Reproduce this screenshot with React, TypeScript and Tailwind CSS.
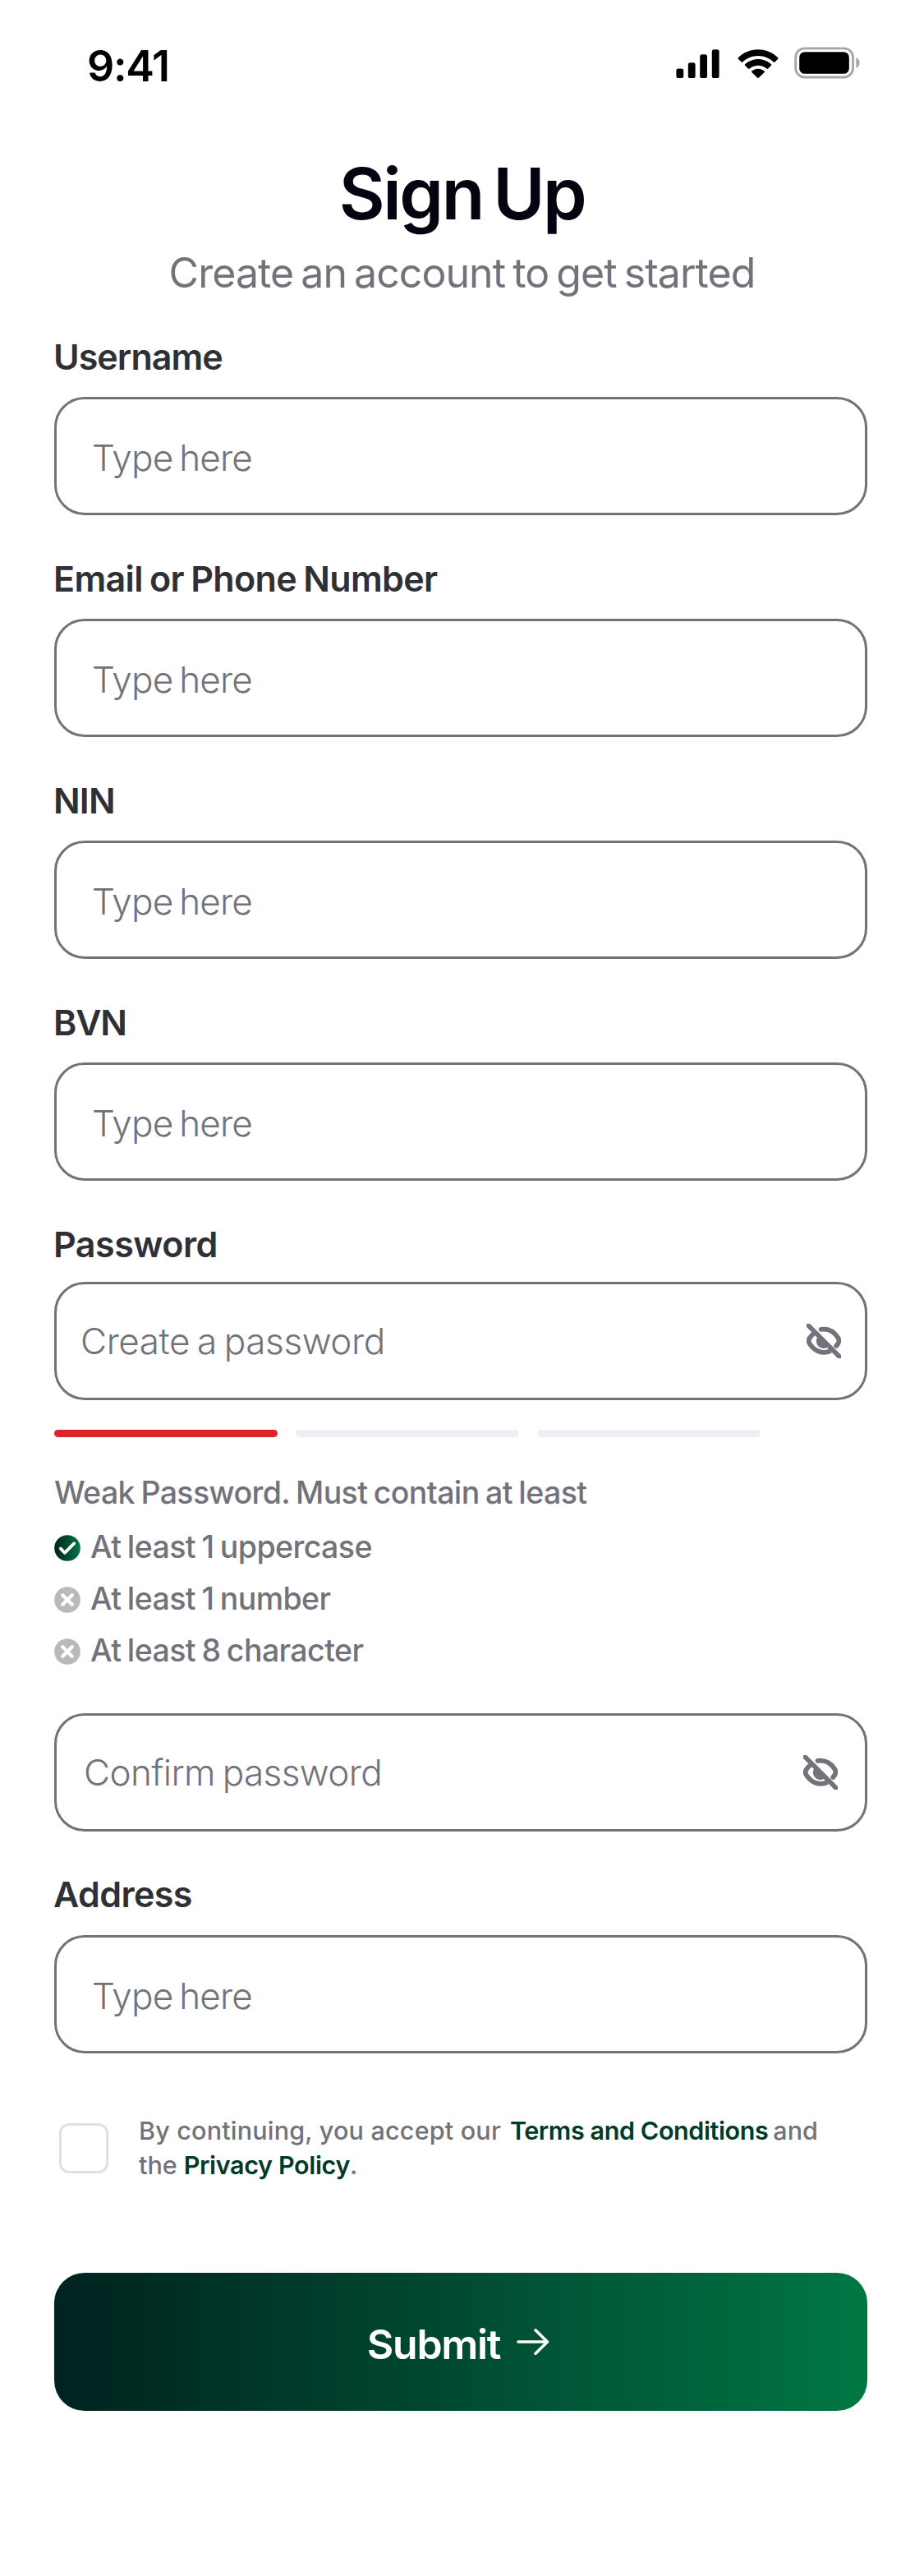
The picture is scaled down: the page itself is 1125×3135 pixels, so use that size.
import type { ReactNode } from "react";

function StatusIcons() {
  return (
    <div className="flex items-start text-black">
      <svg width="54" height="36" viewBox="0 0 54 36" fill="currentColor">
        <rect x="0.4" y="23.5" width="8.8" height="11.5" rx="2.6" />
        <rect x="14.8" y="16.3" width="8.8" height="18.7" rx="2.6" />
        <rect x="29.2" y="6.2" width="8.8" height="28.8" rx="2.6" />
        <rect x="43.8" y="0.2" width="8.8" height="34.8" rx="2.6" />
      </svg>
      <svg className="ml-[21px]" width="50" height="36" viewBox="0 0 50 36" fill="currentColor">
        <path d="M25 0.2C34.5 0.2 43 4 49.2 10.2Q50 11 49.2 11.8L45.4 15.6Q44.6 16.4 43.8 15.6C38.7 10.7 32.2 8 25 8S11.3 10.7 6.2 15.6Q5.4 16.4 4.6 15.6L0.8 11.8Q0 11 0.8 10.2C7 4 15.5 0.2 25 0.2Z" />
        <path d="M25 12C31.2 12 36.7 14.3 40.9 18.2Q41.7 19 40.9 19.8L37.1 23.6Q36.3 24.3 35.5 23.6C32.6 21.1 29 19.7 25 19.7S17.4 21.1 14.5 23.6Q13.7 24.3 12.9 23.6L9.1 19.8Q8.3 19 9.1 18.2C13.3 14.3 18.8 12 25 12Z" />
        <path d="M25 23.7C28 23.7 30.7 24.8 32.7 26.5Q33.4 27.2 32.7 27.9L25.7 34.8Q25 35.4 24.3 34.8L17.3 27.9Q16.6 27.2 17.3 26.5C19.3 24.8 22 23.7 25 23.7Z" />
      </svg>
      <svg className="-mt-[3px] ml-[19px]" width="81" height="39" viewBox="0 0 81 39">
        <rect x="1.7" y="1.8" width="69.8" height="35.2" rx="11" fill="none" stroke="#a6a6a6" strokeWidth="2.8" />
        <rect x="6.2" y="6.2" width="60.6" height="26.6" rx="6.5" fill="#000" />
        <path d="M75.3 13.2C78 14.3 79.6 16.6 79.6 19.4S78 24.5 75.3 25.6Z" fill="#a6a6a6" />
      </svg>
    </div>
  );
}

function EyeOffIcon() {
  return (
    <svg width="42" height="42" viewBox="0 0 42 42" fill="none" stroke="currentColor" strokeWidth="5.8" strokeLinecap="round">
      <path d="M17.6 6.8C27 5.6 34 10 38.4 17.2Q40.4 20.8 38.4 24L36.2 27" />
      <path d="M9.5 11.3Q6 14 3.6 17.6Q1.8 20.8 3.6 24C9.5 33.5 19.5 37.5 29.5 33" strokeLinecap="butt" />
      <path d="M14.2 16.2A8.3 8.3 0 0 0 25.8 27.8Z" fill="currentColor" stroke="currentColor" strokeWidth="1.4" />
      <path d="M4.1 0L42 37.9V42H37.9L0 4.1V0Z" fill="currentColor" stroke="none" />
    </svg>
  );
}

function CheckBadge() {
  return (
    <svg width="32" height="32" viewBox="0 0 32 32" fill="none">
      <defs>
        <linearGradient id="badge" x1="0" y1="0" x2="1" y2="0">
          <stop stopColor="#00231f" />
          <stop offset="1" stopColor="#007743" />
        </linearGradient>
      </defs>
      <circle cx="16" cy="16" r="15.8" fill="url(#badge)" />
      <path d="M7.9 16.6L12.7 21.8L24.2 10.4" stroke="#fff" strokeWidth="3.8" strokeLinecap="round" strokeLinejoin="round" />
    </svg>
  );
}

function CrossBadge() {
  return (
    <svg width="32" height="32" viewBox="0 0 32 32" fill="none">
      <circle cx="16" cy="16" r="15.8" fill="#b9b9b9" />
      <path d="M10.2 10.2L21.8 21.8M21.8 10.2L10.2 21.8" stroke="#fff" strokeWidth="4.2" strokeLinecap="round" />
    </svg>
  );
}

function Label({ text, className }: { text: string; className: string }) {
  return (
    <div className={`h-14 text-[43px] leading-[54px] font-[640] text-[#2f3036] ${className}`}>
      <span className="-ml-px">{text}</span>
    </div>
  );
}

function InputBox({ children }: { children: ReactNode }) {
  return (
    <div className="flex h-[144px] w-full items-center justify-between rounded-[37px] border-3 border-[#72727b] text-[44px] leading-none font-[340] text-[#72727b]">
      {children}
    </div>
  );
}

function TextField({ label, className }: { label: string; className: string }) {
  return (
    <div>
      <Label text={label} className={className} />
      <div className="mt-[20.5px]">
        <InputBox>
          <span className="mt-1 pl-[43px] tracking-[-0.85px] [word-spacing:-3.5px]">Type here</span>
        </InputBox>
      </div>
    </div>
  );
}

function Rule({ met, children }: { met: boolean; children: ReactNode }) {
  return (
    <li className="flex h-[63px] items-center gap-[12px]">
      <span className="mt-1">{met ? <CheckBadge /> : <CrossBadge />}</span>
      <span className="mt-0.5 tracking-[-0.58px] [word-spacing:-2px]">{children}</span>
    </li>
  );
}

export default function App() {
  return (
    <div className="h-[3135px] w-[1125px] bg-white font-['Inter',sans-serif]">
      <header className="flex h-[162px] items-start justify-between pr-[77px] pl-[106px]">
        <span className="mt-[51px] text-[52px] leading-[60px] font-semibold tracking-[-1.3px] text-black">9:41</span>
        <span className="mt-[60px]">
          <StatusIcons />
        </span>
      </header>

      <div className="mt-6 text-center">
        <h1 className="text-[86px] leading-[100px] font-semibold tracking-[-2.4px] text-[#05030f] [word-spacing:-7px]">Sign Up</h1>
        <p className="mt-4 text-[50px] leading-[61px] tracking-[-0.95px] text-[#72727b] [word-spacing:-4px]">
          Create an account to get started
        </p>
      </div>

      <main className="mt-[43.5px] mr-[69px] ml-[66px]">
        <div className="flex flex-col gap-[49.5px]">
          <TextField label="Username" className="tracking-[-0.95px]" />
          <TextField label="Email or Phone Number" className="tracking-[-0.63px] [word-spacing:-2px]" />
          <TextField label="NIN" className="tracking-[-0.8px]" />
          <TextField label="BVN" className="tracking-[-1.2px]" />
        </div>

        <Label text="Password" className="mt-[49.5px] tracking-[-0.5px]" />
        <div className="mt-[17px]">
          <InputBox>
            <span className="pl-[29px] tracking-[-0.4px] [word-spacing:-3px]">Create a password</span>
            <span className="mr-[29px]">
              <EyeOffIcon />
            </span>
          </InputBox>
        </div>

        <div className="mt-9 flex gap-[22px]">
          <span className="h-[9px] w-[272px] rounded-full bg-[#dc2328]" />
          <span className="h-[9px] w-[272px] rounded-full bg-[#eff0f6]" />
          <span className="h-[9px] w-[272px] rounded-full bg-[#eff0f6]" />
        </div>

        <div className="mt-[43px] text-[37.5px] leading-[48px] font-medium text-[#72727b]">
          <p className="pt-px tracking-[-0.6px] [word-spacing:-2px]">Weak Password. Must contain at least</p>
          <ul className="mt-[9.5px]">
            <Rule met>At least 1 uppercase</Rule>
            <Rule met={false}>At least 1 number</Rule>
            <Rule met={false}>At least 8 character</Rule>
          </ul>
        </div>

        <div className="mt-[45.5px]">
          <InputBox>
            <span className="pl-[33px] tracking-[-0.6px] [word-spacing:-3px]">Confirm password</span>
            <span className="mr-[33px]">
              <EyeOffIcon />
            </span>
          </InputBox>
        </div>

        <div className="mt-[49.5px]">
          <TextField label="Address" className="tracking-[-0.6px]" />
        </div>

        <div className="mt-[73px] flex items-start pl-1.5">
          <span className="mt-3 h-[61px] w-[60px] rounded-[12px] border-3 border-[#e0e0e0]" />
          <p className="ml-[37px] text-[30.5px] leading-[42px] font-[540] whitespace-nowrap text-[#72727b]">
            <span className="tracking-[0.2px]">By continuing, you accept our</span>
            <span className="ml-[11px] font-semibold tracking-[-0.4px] text-[#003a28]">Terms and Conditions</span>
            <span className="ml-[6px]">and</span>
            <br />
            the
            <span className="ml-[8px] font-semibold tracking-[-0.35px] text-[#003a28]">Privacy Policy</span>.
          </p>
        </div>

        <button className="mt-[110px] flex h-[168px] w-full items-center justify-center gap-5 rounded-[37px] bg-linear-to-r from-[#00231f] to-[#007743] pr-1.5 text-white">
          <span className="mt-1.5 text-[50px] leading-none font-semibold tracking-[-1.3px]">Submit</span>
          <svg width="40" height="34" viewBox="0 0 40 34" fill="none" stroke="currentColor" strokeWidth="3.6" strokeLinecap="round" strokeLinejoin="round">
            <path d="M2 17H37.5M23 2.8L37.5 17L23 31.2" />
          </svg>
        </button>
      </main>
    </div>
  );
}
